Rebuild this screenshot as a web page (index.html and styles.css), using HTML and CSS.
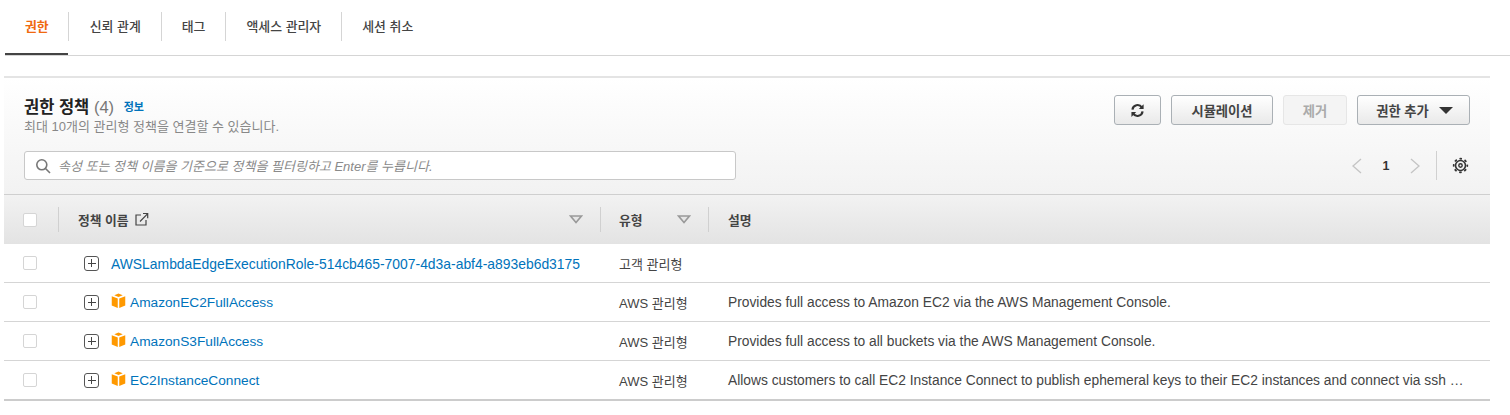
FILE: index.html
```html
<!DOCTYPE html>
<html lang="ko">
<head>
<meta charset="utf-8">
<title>권한</title>
<link rel="stylesheet" href="styles.css">
</head>
<body>
<nav class="tabs">
  <a class="tab active">권한</a>
  <a class="tab">신뢰 관계</a>
  <a class="tab">태그</a>
  <a class="tab">액세스 관리자</a>
  <a class="tab last">세션 취소</a>
</nav>
<section class="panel">
  <header class="panel-head">
    <div class="head-top">
      <div class="titles">
        <h2 class="title">권한 정책 <span class="count">(4)</span> <a class="info">정보</a></h2>
        <p class="subtitle">최대 10개의 관리형 정책을 연결할 수 있습니다.</p>
      </div>
      <div class="actions">
        <button class="btn icon-btn" aria-label="새로 고침">
          <svg width="15" height="15" viewBox="0 0 16 16" fill="none" stroke="#333" stroke-width="2.300"><path d="M2.600 7A5.500 5.500 0 0 1 12.600 4.600"/><path d="M13.400 9A5.500 5.500 0 0 1 3.400 11.400"/><path d="M14.500 1.200V6.300H9.400z" fill="#333" stroke="none"/><path d="M1.500 14.800V9.700H6.600z" fill="#333" stroke="none"/></svg>
        </button>
        <button class="btn sim">시뮬레이션</button>
        <button class="btn disabled">제거</button>
        <button class="btn add">권한 추가 <span class="caret"></span></button>
      </div>
    </div>
    <div class="head-bottom">
      <label class="search">
        <svg width="16" height="16" viewBox="0 0 16 16" fill="none" stroke="#777" stroke-width="1.600"><circle cx="6.800" cy="6.800" r="5"/><path d="M10.500 10.500L15 15"/></svg>
        <span class="placeholder">속성 또는 정책 이름을 기준으로 정책을 필터링하고 Enter를 누릅니다.</span>
      </label>
      <div class="pager">
        <svg width="12" height="18" viewBox="0 0 12 18" fill="none" stroke="#c4c4c4" stroke-width="1.300"><path d="M10 2L2 9l8 7"/></svg>
        <span class="page">1</span>
        <svg width="12" height="18" viewBox="0 0 12 18" fill="none" stroke="#c4c4c4" stroke-width="1.300"><path d="M2 2l8 7-8 7"/></svg>
        <span class="pager-div"></span>
        <svg class="gear" width="17" height="17" viewBox="0 0 24 24" fill="none" stroke="#333"><circle cx="12" cy="12" r="7" stroke-width="2.200"/><circle cx="12" cy="12" r="9.600" stroke-width="2.400" stroke-dasharray="3.600 3.940" stroke-dashoffset="1.800"/><circle cx="12" cy="12" r="2.400" stroke-width="2"/></svg>
      </div>
    </div>
  </header>
  <div class="grid">
    <div class="hcell c-check"><span class="box"></span></div>
    <div class="hcell c-name">
      <span>정책 이름</span>
      <svg class="ext" width="15" height="15" viewBox="0 0 15 15" fill="none" stroke="#444" stroke-width="1.200"><path d="M7 3H2v10h10V8"/><path d="M6 9.500L13.500 1.800M9 1.500h4.700v4.700"/></svg>
      <svg class="sort" width="14" height="9" viewBox="0 0 14 9"><path d="M1.500 1h11L7 7.500z" fill="#e6e6e6" stroke="#999" stroke-width="1.600"/></svg>
    </div>
    <div class="hcell c-type"><span>유형</span><svg class="sort" width="14" height="9" viewBox="0 0 14 9"><path d="M1.500 1h11L7 7.500z" fill="#e6e6e6" stroke="#999" stroke-width="1.600"/></svg></div>
    <div class="hcell c-desc"><span>설명</span></div>

    <div class="cell"><span class="box"></span></div>
    <div class="cell name">
      <span class="plus"></span>
      <a class="link long">AWSLambdaEdgeExecutionRole-514cb465-7007-4d3a-abf4-a893eb6d3175</a>
    </div>
    <div class="cell">고객 관리형</div>
    <div class="cell desc"></div>

    <div class="cell"><span class="box"></span></div>
    <div class="cell name">
      <span class="plus"></span>
      <svg class="cube" width="15" height="15" viewBox="0 0 16 16"><path d="M8 .5L12.500 2.300 8 4.200 3.500 2.300z" fill="#f90"/><path d="M.8 3.500l6.400 2.400V16L.8 13.300z" fill="#f90"/><path d="M15.200 3.500L8.800 5.900V16l6.400-2.700z" fill="#f90"/></svg>
      <a class="link">AmazonEC2FullAccess</a>
    </div>
    <div class="cell">AWS 관리형</div>
    <div class="cell desc">Provides full access to Amazon EC2 via the AWS Management Console.</div>

    <div class="cell"><span class="box"></span></div>
    <div class="cell name">
      <span class="plus"></span>
      <svg class="cube" width="15" height="15" viewBox="0 0 16 16"><path d="M8 .5L12.500 2.300 8 4.200 3.500 2.300z" fill="#f90"/><path d="M.8 3.500l6.400 2.400V16L.8 13.300z" fill="#f90"/><path d="M15.200 3.500L8.800 5.900V16l6.400-2.700z" fill="#f90"/></svg>
      <a class="link">AmazonS3FullAccess</a>
    </div>
    <div class="cell">AWS 관리형</div>
    <div class="cell desc">Provides full access to all buckets via the AWS Management Console.</div>

    <div class="cell end"><span class="box"></span></div>
    <div class="cell name end">
      <span class="plus"></span>
      <svg class="cube" width="15" height="15" viewBox="0 0 16 16"><path d="M8 .5L12.500 2.300 8 4.200 3.500 2.300z" fill="#f90"/><path d="M.8 3.500l6.400 2.400V16L.8 13.300z" fill="#f90"/><path d="M15.200 3.500L8.800 5.900V16l6.400-2.700z" fill="#f90"/></svg>
      <a class="link">EC2InstanceConnect</a>
    </div>
    <div class="cell end">AWS 관리형</div>
    <div class="cell desc end">Allows customers to call EC2 Instance Connect to publish ephemeral keys to their EC2 instances and connect via ssh …</div>
  </div>
</section>
</body>
</html>
```
FILE: styles.css
```css
* { box-sizing: border-box; }
html, body { margin: 0; padding: 0; background: #fff; }
body {
  font-family: "Liberation Sans", "Noto Sans CJK KR", sans-serif;
  font-size: 13px;
  color: #444;
  height: 415px;
  overflow: hidden;
}
.tabs {
  display: flex;
  align-items: center;
  height: 56px;
  margin-left: 5px;
  padding-bottom: 2px;
  border-bottom: 1px solid #d5d5d5;
  position: relative;
}
.tab {
  display: block;
  height: 29px;
  line-height: 29px;
  padding: 0 20px;
  border-right: 1px solid #d5d5d5;
  font-weight: 500;
  font-size: 12.900px;
  color: #444;
}
.tab.last { border-right: 0; }
.tab.active { color: #f0690f; font-weight: 700; position: relative; padding-right: 19px; margin-right: 1px; }
.tab.active::after {
  content: "";
  position: absolute;
  left: 0;
  right: 0;
  top: 41px;
  height: 2px;
  background: #444;
}
.panel {
  margin: 20px 20px 0 4px;
  border-top: 2px solid #e4e4e4;
}
.panel-head {
  height: 117px;
  padding: 17px 20px 0 20px;
  background: linear-gradient(#fff, #f2f2f2);
  border-bottom: 1px solid #cfcfcf;
}
.head-top { display: flex; justify-content: space-between; height: 56px; }
.titles { padding-top: 2px; }
.title { margin: 0; font-size: 16.500px; line-height: 20px; font-weight: 700; color: #222; }
.count { font-weight: 400; color: #777; }
.info { font-size: 11px; font-weight: 700; color: #0073bb; margin-left: 5px; vertical-align: 2px; }
.subtitle { margin: 2px 0 0; font-size: 13px; line-height: 15px; color: #888; }
.actions { display: flex; gap: 10px; }
.btn {
  height: 30px;
  border: 1px solid #aab0b5;
  border-radius: 3px;
  background: linear-gradient(#fff, #e9e9e9);
  font: 700 13.300px "Liberation Sans", "Noto Sans CJK KR", sans-serif;
  color: #444;
  padding: 0;
  display: flex;
  align-items: center;
  justify-content: center;
}
.icon-btn { width: 47px; }
.sim { width: 102px; }
.disabled { width: 64px; color: #aaa; border-color: #e6e6e6; background: #f4f4f4; }
.add { width: 113px; gap: 10px; padding-left: 2px; }
.caret { width: 0; height: 0; border: 7px solid transparent; border-top: 7px solid #333; border-bottom: 0; }
.head-bottom { display: flex; justify-content: space-between; align-items: center; }
.search {
  width: 712px;
  height: 29px;
  display: flex;
  align-items: center;
  gap: 7px;
  padding-left: 10px;
  background: #fff;
  border: 1px solid #c8c8c8;
  border-radius: 3px;
}
.placeholder { font-style: italic; font-size: 13px; color: #8a8a8a; }
.pager { display: flex; align-items: center; height: 29px; }
.page { width: 46px; text-align: center; font-size: 12.500px; font-weight: 700; color: #333; }
.pager-div { width: 1px; height: 29px; background: #d0d0d0; margin: 0 15px 0 15px; }
.gear { margin-right: 1px; }
.grid {
  display: grid;
  grid-template-columns: 54px 542px 108px 782px;
  grid-template-rows: 49px 39px 39px 39px 40px;
}
.hcell {
  display: flex;
  align-items: center;
  background: linear-gradient(#f2f2f2, #e3e3e3);
  font-size: 12.800px;
  font-weight: 700;
  color: #444;
  position: relative;
}
.hcell::after {
  content: "";
  position: absolute;
  left: 0;
  top: 12px;
  width: 1px;
  height: 25px;
  background: #d0d0d0;
}
.c-check { padding-left: 19px; }
.c-check::after { display: none; }
.c-name { padding-left: 20px; gap: 5px; padding-right: 17px; }
.c-type { padding-left: 19px; padding-right: 17px; }
.c-desc { padding-left: 20px; }
.sort { margin-left: auto; flex: none; }
.box {
  display: block;
  width: 14px;
  height: 14px;
  border: 1px solid #d5d5d5;
  border-radius: 2px;
  background: #fff;
}
.cell {
  display: flex;
  align-items: center;
  padding-left: 19px;
  border-bottom: 1px solid #d5d5d5;
  font-size: 13px;
  color: #444;
  white-space: nowrap;
  min-width: 0;
}
.cell.end { border-bottom: 2px solid #ccc; }
.cell.name { padding-left: 26px; }
.plus {
  flex: none;
  width: 15px;
  height: 15px;
  border: 1.500px solid #555;
  border-radius: 3px;
  margin-right: 12px;
  background:
    linear-gradient(#444, #444) center / 8px 1px no-repeat,
    linear-gradient(#444, #444) center / 1px 8px no-repeat;
}
.cube { flex: none; margin-right: 4px; margin-top: -4px; }
.link { color: #0073bb; font-size: 13.700px; line-height: 18px; padding-top: 2px; }
.link.long { font-size: 13.900px; }
.desc { padding-left: 20px; font-size: 13.800px; }
```
